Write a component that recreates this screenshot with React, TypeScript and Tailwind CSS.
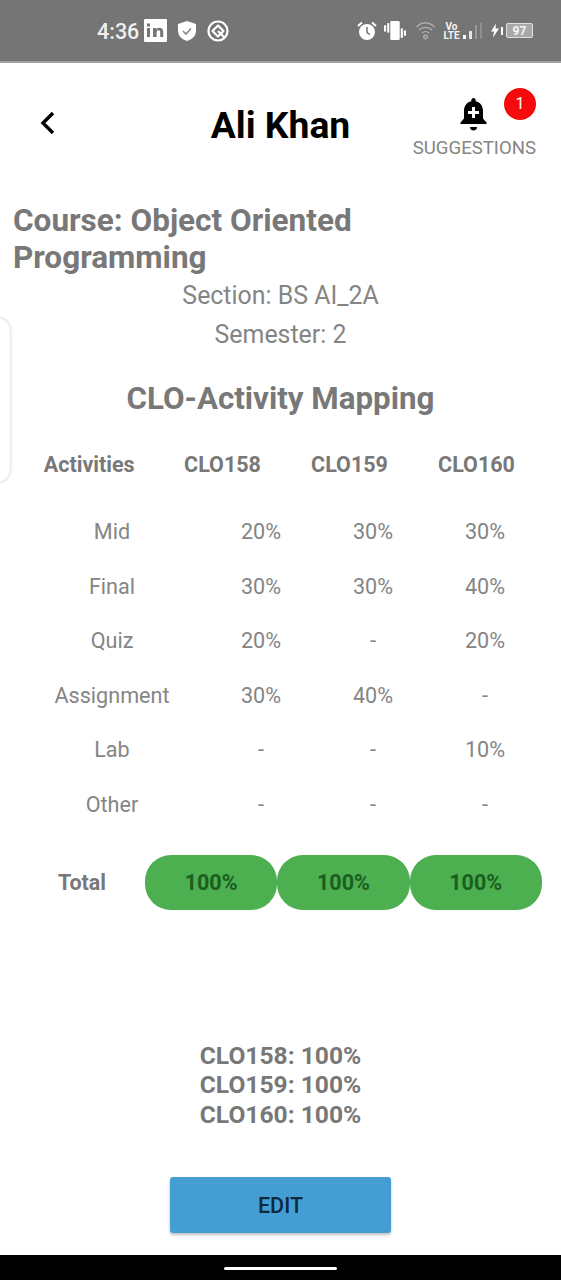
import React from 'react';

const rows = [
  { name: 'Mid', a: '20%', b: '30%', c: '30%' },
  { name: 'Final', a: '30%', b: '30%', c: '40%' },
  { name: 'Quiz', a: '20%', b: '-', c: '20%' },
  { name: 'Assignment', a: '30%', b: '40%', c: '-' },
  { name: 'Lab', a: '-', b: '-', c: '10%' },
  { name: 'Other', a: '-', b: '-', c: '-' },
];

function StatusBar() {
  return (
    <div className="h-[63px] bg-[#757575] border-b-2 border-[#a3a3a3] flex items-center justify-between pl-[97px] pr-[28px] text-white shrink-0">
      <div className="flex items-center">
        <span className="w-[42px] pt-[2px] text-[21.500px] font-medium text-[#f0f0f0] leading-none whitespace-nowrap">4:36</span>
        <svg className="ml-[5px]" width="23" height="23" viewBox="0 0 23 23">
          <rect width="23" height="23" rx="1" fill="#fff" />
          <rect x="3" y="9" width="3" height="9" fill="#757575" />
          <rect x="3" y="4.500" width="3" height="3" fill="#757575" />
          <path d="M9 9h3v1.500c.6-1 1.700-1.700 3.200-1.700 3 0 4 1.800 4 4.700V18h-3v-4.700c0-1.300-.4-2.100-1.600-2.100-1.300 0-2 .9-2 2.200V18H9z" fill="#757575" />
        </svg>
        <svg className="ml-[10px]" width="20" height="22" viewBox="0 0 20 22">
          <path d="M10 1l9 3v7c0 5-4 8.500-9 10C5 19.500 1 16 1 11V4z" fill="#fff" />
          <path d="M6 11l3 3 5-5.500" fill="none" stroke="#8a8a8a" strokeWidth="1.600" />
        </svg>
        <svg className="ml-[10px]" width="22" height="22" viewBox="0 0 22 22" fill="none" stroke="#fff" strokeWidth="2.200">
          <circle cx="11" cy="11" r="9.500" />
          <path d="M11 5.500l5.500 5.500-5.500 5.500L5.500 11z" strokeLinejoin="round" />
          <path d="M11 11l7 7" />
        </svg>
      </div>
      <div className="flex items-center">
        <svg width="20" height="20" viewBox="0 0 20 20">
          <circle cx="10" cy="11" r="8" fill="#fff" />
          <path d="M10 6v5.500l3 2" fill="none" stroke="#757575" strokeWidth="1.500" />
          <path d="M1 5l4-3.500M19 5l-4-3.500" stroke="#fff" strokeWidth="2" />
        </svg>
        <svg className="ml-[7px]" width="22" height="19" viewBox="0 0 21 18" fill="#fff">
          <rect x="6" y="0" width="9" height="18" rx="1" />
          <rect x="0" y="4" width="2" height="6" />
          <rect x="3" y="2" width="2" height="9" />
          <rect x="16" y="7" width="2" height="9" />
          <rect x="19" y="9" width="2" height="5" />
        </svg>
        <svg className="ml-[9px]" width="21" height="19" viewBox="0 0 20 19" fill="none" stroke="#b5b5b5" strokeWidth="1.300">
          <path d="M1 6c5-5.500 13-5.500 18 0" />
          <path d="M3.500 9c3.500-3.500 9.500-3.500 13 0" />
          <path d="M6.500 12c2-1.800 5-1.800 7 0" />
          <circle cx="10" cy="16" r="1.800" />
        </svg>
        <div className="ml-[8px] flex flex-col items-center text-[10px] leading-[9px] font-bold text-[#f5f5f5] w-[15px]">
          <span>Vo</span>
          <span>LTE</span>
        </div>
        <div className="ml-[4px] flex items-end gap-[3px] h-[16px] w-[20px]">
          <div className="w-[3px] h-[4px] bg-white" />
          <div className="w-[3px] h-[8px] bg-[#e5e5e5]" />
          <div className="w-[2px] h-[14px] bg-[#999]" />
          <div className="w-[2px] h-[16px] bg-[#8f8f8f]" />
        </div>
        <svg className="ml-[8px]" width="8" height="15" viewBox="0 0 8 14" fill="#fff">
          <path d="M5 0L0 8h3l-1 6 6-9H4.500z" />
        </svg>
        <div className="ml-[2px] w-[2px] h-[8px] bg-white" />
        <div className="ml-[3px] w-[27px] h-[15px] border border-[#e0e0e0] rounded-[2px] bg-[#a8a8a8] flex items-center justify-center text-[12px] font-bold text-[#f5f5f5] leading-none">
          97
        </div>
      </div>
    </div>
  );
}

function Header() {
  return (
    <div className="relative h-[117px] shrink-0">
      <svg className="absolute left-[39px] top-[48px]" width="18" height="24" viewBox="0 0 18 24" fill="none" stroke="#000" strokeWidth="3.400">
        <path d="M14 2L4 12l10 10" />
      </svg>
      <div className="absolute left-0 right-0 top-[39px] text-center text-[37.300px] leading-[46px] font-bold text-black">Ali Khan</div>
      {/* bell + badge */}
      <svg className="absolute left-[458px] top-[33px]" width="31" height="36" viewBox="0 0 31 36">
        <path d="M15.500 2c1.300 0 2.200 1 2.200 2.300v.9c4.800 1 7.300 5 7.300 9.800v7.500l3.500 4v1.500H2.500V26.500l3.500-4V15c0-4.800 2.500-8.800 7.300-9.800v-.9C13.300 3 14.200 2 15.500 2z" fill="#000" />
        <path d="M12 31h7c0 2-1.500 3.500-3.500 3.500S12 33 12 31z" fill="#000" />
        <path d="M15.500 11v11M10 16.500h11" stroke="#fff" strokeWidth="3" />
      </svg>
      <div className="absolute left-[504px] top-[25px] w-[32px] h-[32px] rounded-full bg-[#f50b0b] text-white text-[16px] leading-[32px] text-center">1</div>
      <div className="absolute right-[25px] top-[74px] text-[18.600px] leading-[22px] text-[#858585]">SUGGESTIONS</div>
    </div>
  );
}

export default function App() {
  return (
    <div className="relative w-[561px] h-[1280px] bg-white flex flex-col overflow-hidden font-['Roboto',sans-serif]">
      <StatusBar />
      <Header />

      {/* side drawer handle */}
      <div className="absolute left-[-20px] top-[317px] w-[31px] h-[166px] rounded-[14px] bg-white border border-[#e8e8e8] shadow-[0_0_3px_rgba(0,0,0,0.12)]" />

      <div className="px-[13px] pt-[22px] text-[31.500px] leading-[37px] font-bold text-[#787878]">
        Course: Object Oriented<br />Programming
      </div>
      <div className="text-center text-[24.900px] leading-[39px] text-[#858585]">
        <div>Section: BS AI_2A</div>
        <div>Semester: 2</div>
      </div>
      <div className="mt-[25px] text-center text-[31.300px] leading-[40px] font-bold text-[#787878]">CLO-Activity Mapping</div>

      <div className="mt-[32px] grid grid-cols-[139.500px_127px_127px_127px] pl-[19.500px] text-[21.500px] leading-[28px] font-bold text-[#787878]">
        <div className="text-center">Activities</div>
        <div className="text-center">CLO158</div>
        <div className="text-center">CLO159</div>
        <div className="text-center">CLO160</div>
      </div>

      <div className="mt-[39px] flex flex-col pl-[19px]">
        {rows.map((r) => (
          <div key={r.name} className="grid grid-cols-[186px_112px_112px_112px] h-[54.600px] text-[21.600px] leading-[28px] text-[#858585]">
            <div className="text-center">{r.name}</div>
            <div className="text-center">{r.a}</div>
            <div className="text-center">{r.b}</div>
            <div className="text-center">{r.c}</div>
          </div>
        ))}
      </div>

      <div className="mt-[9px] flex items-center pl-[22px]">
        <div className="w-[123px] pr-[3px] pt-[2px] text-center text-[21.500px] font-bold text-[#787878]">Total</div>
        {[0, 1, 2].map((i) => (
          <div key={i} className="w-[132.300px] h-[55px] pt-[2px] rounded-[26px] bg-[#4caf50] flex items-center justify-center text-[21.500px] font-bold text-[#1b5e20]">
            100%
          </div>
        ))}
      </div>

      <div className="mt-[131px] text-center text-[24.600px] leading-[29.500px] font-bold text-[#787878]">
        <div>CLO158: 100%</div>
        <div>CLO159: 100%</div>
        <div>CLO160: 100%</div>
      </div>

      <div className="mt-[48px] mx-auto w-[221px] h-[56px] pt-[2px] rounded-[3px] bg-[#459ed3] shadow-[0_2px_3px_rgba(0,0,0,0.25)] flex items-center justify-center text-[21.500px] font-medium text-[#0c2a3e]">
        EDIT
      </div>

      <div className="absolute left-0 right-0 bottom-0 h-[25px] bg-black flex items-center justify-center">
        <div className="w-[113px] h-[3px] bg-white rounded-full mt-[1px]" />
      </div>
    </div>
  );
}
